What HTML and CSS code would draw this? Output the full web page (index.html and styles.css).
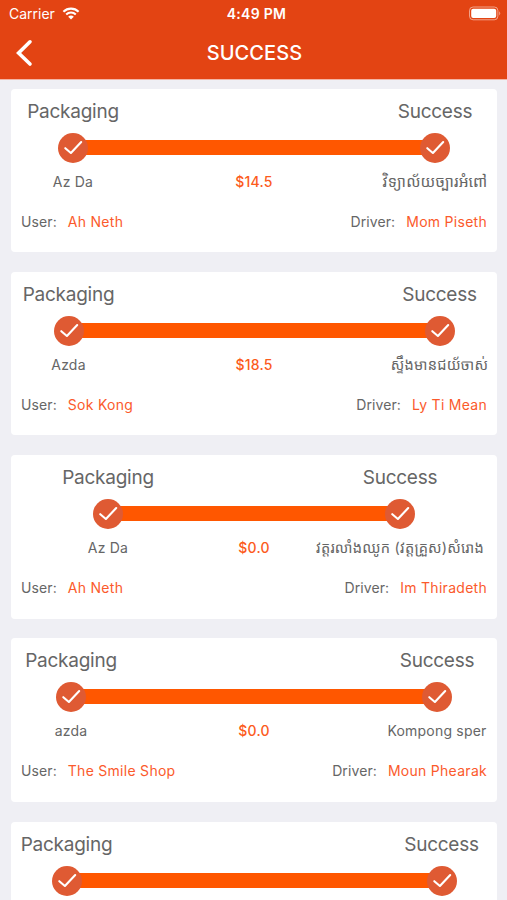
FILE: index.html
```html
<!DOCTYPE html>
<html lang="en">
<head>
<meta charset="utf-8">
<title>Success</title>
<link rel="stylesheet" href="styles.css">
</head>
<body>
<svg width="0" height="0" class="defs" aria-hidden="true">
  <symbol id="check" viewBox="0 0 30 30"><circle cx="15" cy="15" r="15"/><path d="M7.3 15.2L12.9 20L23.2 9"/></symbol>
</svg>
<header>
  <div class="status">
    <div class="carrier"><span>Carrier</span>
      <svg width="18" height="13" viewBox="0 0 18 13"><path d="M1.4 4.7a10.9 10.9 0 0 1 15.2 0M4.2 7.5a6.9 6.9 0 0 1 9.6 0" fill="none" stroke="#fff" stroke-width="2.1"/><path d="M9 12.4L6.2 9.7a3.9 3.9 0 0 1 5.6 0z" fill="#fff"/></svg>
    </div>
    <div class="time">4:49 PM</div>
    <svg class="battery" width="33" height="15" viewBox="0 0 33 15"><rect x="1.5" y="1" width="28.4" height="12.8" rx="3.6" fill="none" stroke="#fff" stroke-opacity=".5"/><rect x="3.2" y="2.8" width="25" height="9.2" rx="2" fill="#fff"/><path d="M31.2 5.2q2 2.2 0 4.4z" fill="#fff" fill-opacity=".5"/></svg>
  </div>
  <div class="nav">
    <svg class="back" width="18" height="28" viewBox="0 0 18 28"><path d="M14 2.8L2.6 14L14 25" fill="none" stroke="#fff" stroke-width="3.6" stroke-linecap="round"/></svg>
    <h1>SUCCESS</h1>
  </div>
</header>
<main>
  <article class="card w104">
    <div class="step"><b>Packaging</b><svg class="dot"><use href="#check"/></svg><span>Az Da</span></div>
    <div class="mid"><i></i><span>$14.5</span></div>
    <div class="step"><b>Success</b><svg class="dot"><use href="#check"/></svg><span class="km">វិទ្យាល័យច្បារអំពៅ</span></div>
    <footer><div>User:<em>Ah Neth</em></div><div>Driver:<em>Mom Piseth</em></div></footer>
  </article>
  <article class="card w95">
    <div class="step"><b>Packaging</b><svg class="dot"><use href="#check"/></svg><span>Azda</span></div>
    <div class="mid"><i></i><span>$18.5</span></div>
    <div class="step"><b>Success</b><svg class="dot"><use href="#check"/></svg><span class="km">ស្ទឹងមានជយ័ចាស់</span></div>
    <footer><div>User:<em>Sok Kong</em></div><div>Driver:<em>Ly Ti Mean</em></div></footer>
  </article>
  <article class="card w174">
    <div class="step"><b>Packaging</b><svg class="dot"><use href="#check"/></svg><span>Az Da</span></div>
    <div class="mid"><i></i><span>$0.0</span></div>
    <div class="step"><b>Success</b><svg class="dot"><use href="#check"/></svg><span class="km">វត្តរលាំងឈូក (វត្តគ្រួស)សំរោង</span></div>
    <footer><div>User:<em>Ah Neth</em></div><div>Driver:<em>Im Thiradeth</em></div></footer>
  </article>
  <article class="card w100">
    <div class="step"><b>Packaging</b><svg class="dot"><use href="#check"/></svg><span>azda</span></div>
    <div class="mid"><i></i><span>$0.0</span></div>
    <div class="step"><b>Success</b><svg class="dot"><use href="#check"/></svg><span>Kompong sper</span></div>
    <footer><div>User:<em>The Smile Shop</em></div><div>Driver:<em>Moun Phearak</em></div></footer>
  </article>
  <article class="card w91">
    <div class="step"><b>Packaging</b><svg class="dot"><use href="#check"/></svg></div>
    <div class="mid"><i></i></div>
    <div class="step"><b>Success</b><svg class="dot"><use href="#check"/></svg></div>
  </article>
</main>
</body>
</html>
```
FILE: styles.css
```css
* { box-sizing: border-box; }
body { margin: 0; height: 900px; overflow: hidden; background: #efeff4; color: #666; font: 14px/20px Inter, "Noto Sans Khmer", "Khmer OS", sans-serif; }
.defs { position: absolute; }
header { height: 80px; background: #e34413; color: #fff; border-bottom: 1px solid #f3b5a4; }
.status { height: 27px; padding: 0 6px 0 9px; display: grid; grid-template-columns: 1fr auto 1fr; align-items: center; }
.carrier { display: flex; align-items: center; gap: 7px; }
.time { font-weight: 600; letter-spacing: .3px; padding-left: 3px; }
.battery { justify-self: end; }
.nav { height: 52px; padding: 0 14px 0 16px; display: grid; grid-template-columns: 1fr auto 1fr; align-items: center; }
h1 { margin: 0; font-size: 20px; font-weight: 500; line-height: 24px; letter-spacing: .1px; }
main { padding: 8.5px 10px 0 11px; display: grid; gap: 19.8px; }
.card { height: 163.5px; padding: 11px 10px 0; background: #fff; border-radius: 4px; display: grid; grid-template-columns: var(--w) 1fr var(--w); grid-template-rows: 92px 40px; }
.w104 { --w: 104px; }
.w95 { --w: 95px; }
.w174 { --w: 174px; }
.w100 { --w: 100px; }
.w91 { --w: 91px; }
.step { display: flex; flex-direction: column; align-items: center; white-space: nowrap; z-index: 1; }
.step b { font-size: 19px; font-weight: 400; line-height: 24px; letter-spacing: -.25px; }
.dot { width: 30px; height: 30px; flex: none; margin: 9px 0; fill: #df5a33; }
#check path { fill: none; stroke: #fff; stroke-width: 2.1; stroke-linecap: round; stroke-linejoin: round; }
.step span, .mid span { line-height: 20px; letter-spacing: .2px; }
.step .km { font-size: 14.6px; }
.w104 .km { font-size: 15.4px; }
.mid { display: flex; flex-direction: column; align-items: center; color: #fc5b1c; font-weight: 500; }
.mid i { height: 15px; flex: none; width: calc(100% + var(--w)); margin: 40px calc(var(--w) / -2) 17px; background: #ff5700; }
footer { grid-column: 1 / -1; display: flex; justify-content: space-between; line-height: 20px; padding-top: 20px; letter-spacing: .1px; }
footer em { font-style: normal; color: #fb5a2c; margin-left: 11px; letter-spacing: .28px; }
```
